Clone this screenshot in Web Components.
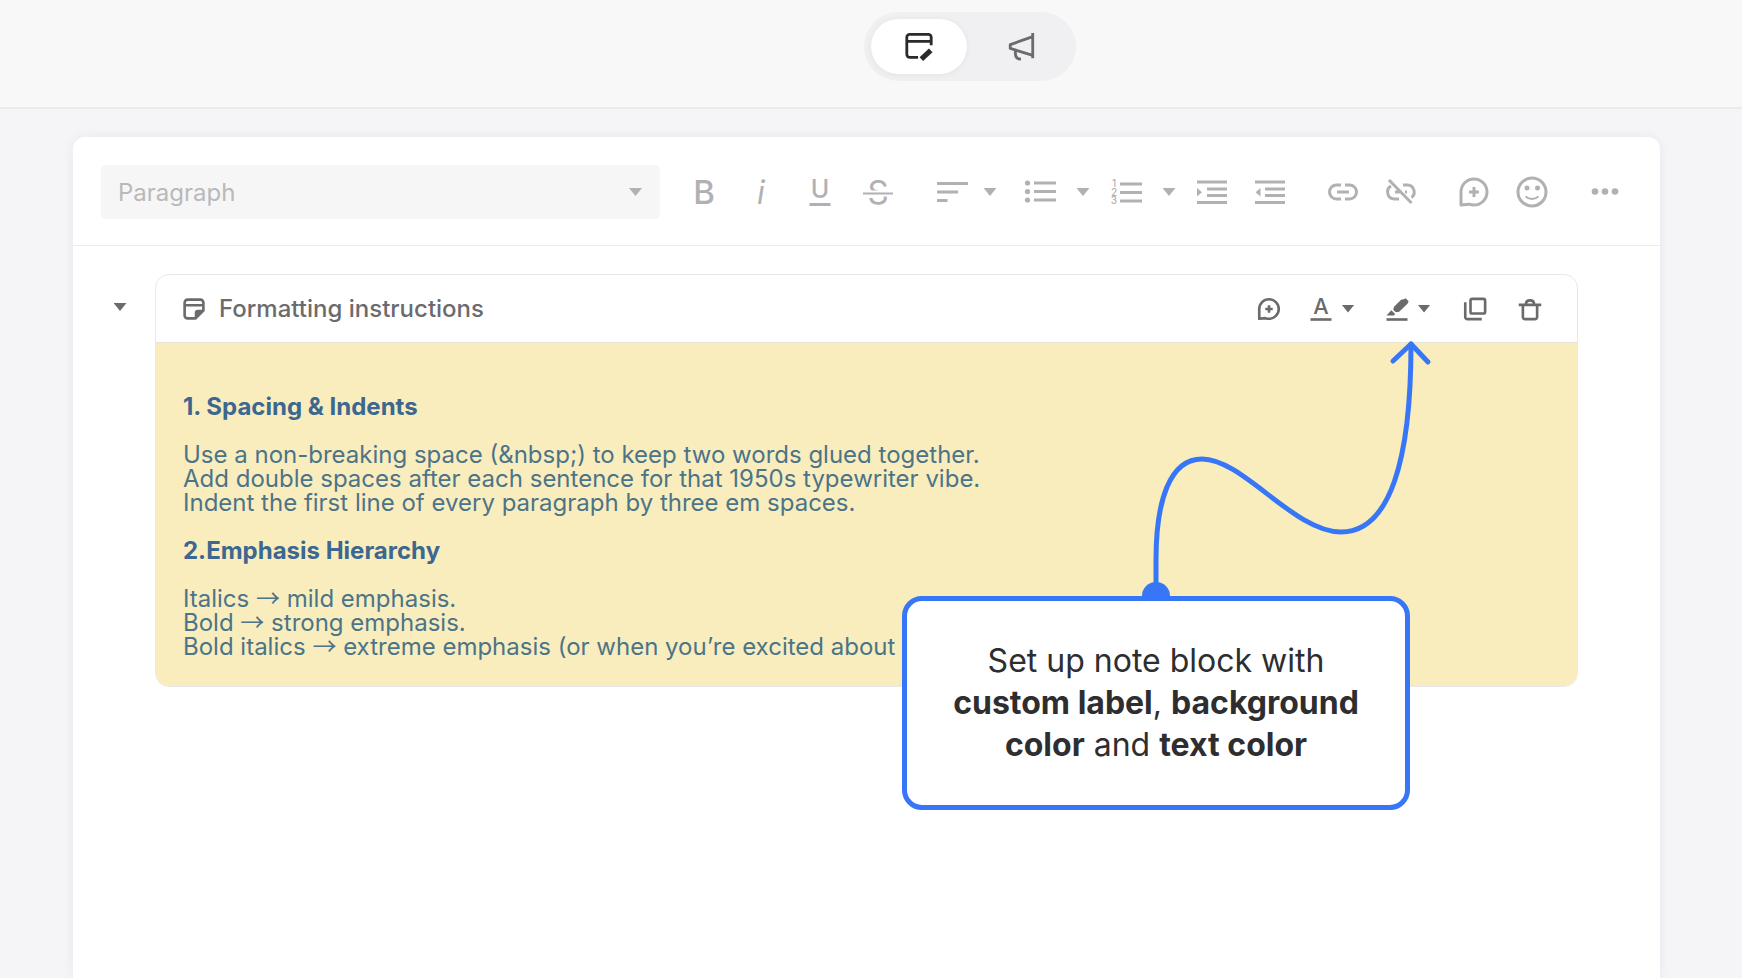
<!DOCTYPE html>
<html lang="en">
<head>
  <meta charset="UTF-8">
  <meta name="viewport" content="width=device-width, initial-scale=1.0">
  <title>Document editor</title>
  <style>
    body {
      margin: 0;
      font-family: Inter, "Liberation Sans", sans-serif;
      font-size: 24px;
      color: #2e2e30;
      background: #f5f5f8;
    }
    note-block > p {
      width: fit-content;
      margin: 0 0 24px;
    }
    note-block > p:last-of-type {
      margin-bottom: 0;
    }
    note-block strong {
      color: #3c6790;
      font-weight: 700;
    }
    note-block i {
      font-family: "Noto Sans CJK JP", sans-serif;
      font-style: normal;
      line-height: 0;
    }
    callout-tip p {
      margin: 0;
    }
  </style>
</head>
<body>
  <editor-page>
    <mode-switch slot="header"></mode-switch>
    <editor-toolbar slot="toolbar"></editor-toolbar>
    <note-block label="Formatting instructions">
      <p><strong>1. Spacing &amp; Indents</strong></p>
      <p>Use a non-breaking space (&amp;nbsp;) to keep two words glued together.<br>Add double spaces after each sentence for that 1950s typewriter vibe.<br>Indent the first line of every paragraph by three em spaces.</p>
      <p><strong>2.Emphasis Hierarchy</strong></p>
      <p>Italics <i>→</i> mild emphasis.<br>Bold <i>→</i> strong emphasis.<br>Bold italics <i>→</i> extreme emphasis (or when you’re excited about</p>
      <callout-tip slot="callout">
        <p>Set up note block with</p>
        <p><b>custom label</b>, <b>background</b></p>
        <p><b>color</b> and <b>text color</b></p>
      </callout-tip>
    </note-block>
  </editor-page>

  <script>
    // All icons share a 32 x 32 grid
    const ICONS = {
      editor: '<path d="M29 14V5.500a3 3 0 0 0-3-3H6a3 3 0 0 0-3 3V24a3 3 0 0 0 3 3h9M3 10h26"/><path d="M18.500 29 28.500 19.500" stroke-width="5.500" stroke-linecap="butt"/>',
      megaphone: '<path d="M28.500 1v27M28.500 5 4.500 13.500v4l24 7.500M10 19.500V23q0 6 6 6"/>',
      bold: '<text x="16" y="28" font-size="33" font-weight="500">B</text>',
      italic: '<text x="15" y="28" font-size="32" font-style="italic">i</text>',
      underline: '<text x="16" y="22" font-size="25" font-weight="500">U</text><path d="M5.500 28.500h21"/>',
      strike: '<text x="16" y="28" font-size="33">S</text><path d="M1 17.500h30" stroke="#fff" stroke-width="6"/><path d="M1 17.500h30" stroke-width="2"/>',
      align: '<path d="M1 7.500h31M1 16h21M1 24.500h10.500"/>',
      bullets: '<path d="M10 7h22M10 15.500h22M10 24h22"/><g fill="currentColor" stroke="none"><circle cx="3.500" cy="7" r="2.600"/><circle cx="3.500" cy="15.500" r="2.600"/><circle cx="3.500" cy="24" r="2.600"/></g>',
      numbers: '<path d="M10 8h22M10 16.500h22M10 25h22"/><g font-size="10" font-weight="500"><text x="4" y="11">1</text><text x="4" y="19.500">2</text><text x="4" y="28">3</text></g>',
      indent: '<path d="M1 6h30M11 13h20M11 19.500h20M1 26.500h30"/><path d="M1 12v8.500l5-4.250z" fill="currentColor" stroke="none"/>',
      outdent: '<path d="M1 6h30M11 13h20M11 19.500h20M1 26.500h30"/><path d="M6.500 12v8.500l-5-4.250z" fill="currentColor" stroke="none"/>',
      link: '<path d="M14 9H9.500a7 7 0 0 0 0 14H14M18 9h4.500a7 7 0 0 1 0 14H18M10 16h12" stroke-linecap="butt"/>',
      unlink: '<path d="M6 10a7 7 0 0 0 3.500 13H14M18 9h4.500a7 7 0 0 1 4 12.500M10 16h5M20 16h2M4 4l22.500 23" stroke-linecap="butt"/>',
      comment: '<path d="M3 29V16a13 13 0 1 1 13 13c-2 0-3.500-.3-5-.8z"/><path d="M16 11v10M11 16h10"/>',
      smile: '<circle cx="16" cy="16" r="14"/><path d="M9.500 20.500q6.500 5 13 0" stroke-width="2"/><g fill="currentColor" stroke="none"><circle cx="11" cy="12" r="2.500"/><circle cx="21.500" cy="12" r="2.500"/></g>',
      more: '<g fill="currentColor" stroke="none"><circle cx="6" cy="15.500" r="3.300"/><circle cx="16" cy="15.500" r="3.300"/><circle cx="26" cy="15.500" r="3.300"/></g>',
      note: '<path d="M18 28.500H7.500a4 4 0 0 1-4-4v-17a4 4 0 0 1 4-4h17a4 4 0 0 1 4 4V18M3.500 11h25"/><path d="M17 30v-9a4 4 0 0 1 4-4h9v2L19 30z" fill="currentColor" stroke="none"/>',
      color: '<text x="16" y="23" font-size="29" font-weight="500">A</text><path d="M2 30h28"/>',
      highlight: '<path d="M2 30h28"/><path d="M12 13 21.500 3.500 25 3l2.500-1.500 4 4L30 9 18.500 20H14l-3-3zM8.500 17.500l5 5-1.500 2H2z" fill="currentColor" stroke="none"/>',
      copy: '<rect x="10" y="2.500" width="19.500" height="19.500" rx="2.500"/><path d="M3 7v19.500a3 3 0 0 0 3 3h19"/>',
      trash: '<path d="M1 10.500h30M6.500 10.500v16a3 3 0 0 0 3 3h13a3 3 0 0 0 3-3v-16M10.500 10q0-5.500 5.500-5.500T21.500 10"/>'
    };

    class AppIcon extends HTMLElement {
      connectedCallback() {
        this.attachShadow({ mode: 'open' });
        this.shadowRoot.innerHTML = `
          <style>
            :host {
              display: block;
              width: var(--icon-size, 32px);
              height: var(--icon-size, 32px);
            }
            svg {
              display: block;
              width: 100%;
              height: 100%;
              overflow: visible;
              fill: none;
              stroke: currentColor;
              stroke-width: var(--icon-stroke, 3);
              stroke-linejoin: round;
            }
            text {
              fill: currentColor;
              stroke: none;
              text-anchor: middle;
            }
          </style>
          <svg viewBox="0 0 32 32" aria-hidden="true">${ICONS[this.getAttribute('name')]}</svg>
        `;
      }
    }
    customElements.define('app-icon', AppIcon);

    // Small downward triangle used by every drop-down
    class CaretDown extends HTMLElement {
      connectedCallback() {
        this.attachShadow({ mode: 'open' });
        this.shadowRoot.innerHTML = `
          <style>
            :host {
              display: block;
              width: 13px;
              height: 8px;
              background: currentColor;
              clip-path: polygon(0 0, 100% 0, 50% 100%);
            }
          </style>
        `;
      }
    }
    customElements.define('caret-down', CaretDown);

    // Icon button, with a second button for the menu when "menu" is set
    class ToolButton extends HTMLElement {
      connectedCallback() {
        const label = this.getAttribute('label');
        this.attachShadow({ mode: 'open' });
        this.shadowRoot.innerHTML = `
          <style>
            :host {
              display: flex;
              align-items: center;
            }
            button {
              display: flex;
              align-items: center;
              justify-content: center;
              width: var(--tool-width, 58px);
              height: var(--tool-height, 54px);
              padding: 0;
              border: 0;
              background: none;
              color: inherit;
              font: inherit;
              cursor: pointer;
            }
            .menu {
              width: 18px;
              margin: var(--caret-margin, 0 5px);
            }
          </style>
          <button type="button" aria-label="${label}"><app-icon name="${this.getAttribute('icon')}"></app-icon></button>
          ${this.hasAttribute('menu') ? `<button type="button" class="menu" aria-label="${label} options"><caret-down></caret-down></button>` : ''}
        `;
      }
    }
    customElements.define('tool-button', ToolButton);

    class ModeSwitch extends HTMLElement {
      connectedCallback() {
        this.attachShadow({ mode: 'open' });
        this.shadowRoot.innerHTML = `
          <style>
            :host {
              display: flex;
              gap: 6px;
              padding: 7px;
              border-radius: 35px;
              background: #f0f0f2;
              --icon-size: 30px;
            }
            button {
              display: flex;
              align-items: center;
              justify-content: center;
              width: 96px;
              height: 55px;
              padding: 0;
              border: 0;
              border-radius: 28px;
              background: none;
              color: #6b6b6e;
            }
            .active {
              background: #fff;
              color: #2a2a2c;
              box-shadow: 0 1px 6px rgba(0, 0, 0, 0.06);
            }
          </style>
          <button type="button" class="active" aria-label="Editor"><app-icon name="editor"></app-icon></button>
          <button type="button" aria-label="Announcements"><app-icon name="megaphone"></app-icon></button>
        `;
      }
    }
    customElements.define('mode-switch', ModeSwitch);

    class EditorToolbar extends HTMLElement {
      connectedCallback() {
        this.attachShadow({ mode: 'open' });
        this.shadowRoot.innerHTML = `
          <style>
            :host {
              display: flex;
              align-items: center;
              gap: 15px;
              padding: 28px 26px 26px 28px;
              border-bottom: 1px solid #ebebed;
              color: #b1b1b4;
            }
            .format {
              display: grid;
              flex: 1;
              align-items: center;
            }
            .format > * {
              grid-area: 1 / 1;
            }
            .format caret-down {
              justify-self: end;
              margin-right: 18px;
              pointer-events: none;
            }
            select {
              appearance: none;
              width: 100%;
              height: 54px;
              padding: 0 17px;
              border: 0;
              border-radius: 5px;
              background: #f6f6f6;
              color: #b9b9bc;
              font: inherit;
            }
            .group {
              display: flex;
            }
            .marks {
              margin-right: 1px;
            }
            .align {
              margin-right: 12px;
              --caret-margin: 0;
            }
          </style>
          <div class="format">
            <select aria-label="Text style">
              <option>Paragraph</option>
            </select>
            <caret-down></caret-down>
          </div>
          <div class="group marks">
            <tool-button icon="bold" label="Bold"></tool-button>
            <tool-button icon="italic" label="Italic"></tool-button>
            <tool-button icon="underline" label="Underline"></tool-button>
            <tool-button icon="strike" label="Strikethrough"></tool-button>
          </div>
          <div class="group">
            <tool-button class="align" icon="align" label="Align" menu></tool-button>
            <tool-button icon="bullets" label="Bulleted list" menu></tool-button>
            <tool-button icon="numbers" label="Numbered list" menu></tool-button>
            <tool-button icon="indent" label="Increase indent"></tool-button>
            <tool-button icon="outdent" label="Decrease indent"></tool-button>
          </div>
          <div class="group">
            <tool-button icon="link" label="Link"></tool-button>
            <tool-button icon="unlink" label="Remove link"></tool-button>
          </div>
          <div class="group">
            <tool-button icon="comment" label="Comment"></tool-button>
            <tool-button icon="smile" label="Emoji"></tool-button>
          </div>
          <tool-button icon="more" label="More"></tool-button>
        `;
      }
    }
    customElements.define('editor-toolbar', EditorToolbar);

    class NoteBlock extends HTMLElement {
      connectedCallback() {
        this.attachShadow({ mode: 'open' });
        this.shadowRoot.innerHTML = `
          <style>
            :host {
              display: flex;
              align-items: flex-start;
              color: #6b6b6e;
            }
            .toggle {
              display: flex;
              align-items: center;
              justify-content: center;
              width: 40px;
              height: 66px;
              margin-right: 15px;
              padding: 0;
              border: 0;
              background: none;
              color: inherit;
            }
            section {
              position: relative;
              flex: 1;
              border: 1px solid #e8e8ea;
              border-radius: 14px;
            }
            header {
              display: flex;
              align-items: center;
              gap: 13px;
              height: 67px;
              padding: 0 35px 0 26px;
              border-bottom: 1px solid #e8e4d8;
              --icon-size: 24px;
              --icon-stroke: 3.500;
              --tool-width: 24px;
              --tool-height: 40px;
              --caret-margin: 0 0 0 6px;
            }
            h2 {
              flex: 1;
              margin: 0;
              font-size: 24px;
              line-height: 32px;
              font-weight: 500;
            }
            .actions {
              display: flex;
              gap: 28px;
            }
            .block {
              display: flex;
              gap: 31px;
              margin-left: 17px;
            }
            .body {
              padding: 52px 27px 27px;
              border-radius: 0 0 13px 13px;
              background: #f9edbe;
              color: #4c7488;
              line-height: 24px;
            }
          </style>
          <button type="button" class="toggle" aria-label="Collapse note"><caret-down></caret-down></button>
          <section>
            <header>
              <app-icon name="note"></app-icon>
              <h2>${this.getAttribute('label')}</h2>
              <div class="actions">
                <tool-button icon="comment" label="Comment"></tool-button>
                <tool-button icon="color" label="Text color" menu></tool-button>
                <tool-button icon="highlight" label="Background color" menu></tool-button>
              </div>
              <div class="block">
                <tool-button icon="copy" label="Duplicate"></tool-button>
                <tool-button icon="trash" label="Delete"></tool-button>
              </div>
            </header>
            <div class="body"><slot></slot></div>
            <slot name="callout"></slot>
          </section>
        `;
      }
    }
    customElements.define('note-block', NoteBlock);

    // Bubble whose arrow points up at the background color button
    class CalloutTip extends HTMLElement {
      connectedCallback() {
        this.attachShadow({ mode: 'open' });
        this.shadowRoot.innerHTML = `
          <style>
            :host {
              position: absolute;
              top: 66px;
              right: 167px;
              width: 508px;
              color: #2e2e30;
              font-size: 32px;
              line-height: 42px;
              text-align: center;
            }
            svg {
              display: block;
              width: 100%;
              height: 255px;
              overflow: visible;
              fill: none;
              stroke: #3777f7;
              stroke-width: 5;
              stroke-linecap: round;
              stroke-linejoin: round;
            }
            .bubble {
              position: relative;
              padding: 39px;
              border: 5px solid #3777f7;
              border-radius: 20px;
              background: #fff;
            }
          </style>
          <svg viewBox="0 0 508 255" aria-hidden="true">
            <path d="M254 250V219C254 159 268 118 300 118C341 118 392 191 439 191C488 191 509 119 509 3"/>
            <path d="M491 20 509 3 526 21"/>
            <circle cx="254" cy="255" r="14" fill="#3777f7" stroke="none"/>
          </svg>
          <div class="bubble"><slot></slot></div>
        `;
      }
    }
    customElements.define('callout-tip', CalloutTip);

    class EditorPage extends HTMLElement {
      connectedCallback() {
        this.attachShadow({ mode: 'open' });
        this.shadowRoot.innerHTML = `
          <style>
            :host {
              display: flex;
              flex-direction: column;
              min-height: 100vh;
            }
            .top {
              display: flex;
              justify-content: center;
              padding: 12px 0 26px 198px;
              border-bottom: 2px solid #ebebed;
              background: #f8f8f8;
            }
            main {
              display: flex;
              flex: 1;
              flex-direction: column;
              padding: 28px 82px 0 73px;
            }
            .card {
              flex: 1;
              border-radius: 12px 12px 0 0;
              background: #fff;
              box-shadow: 0 0 12px rgba(30, 30, 60, 0.06);
            }
            .content {
              padding: 28px 82px 28px 27px;
            }
          </style>
          <div class="top"><slot name="header"></slot></div>
          <main>
            <div class="card">
              <slot name="toolbar"></slot>
              <div class="content"><slot></slot></div>
            </div>
          </main>
        `;
      }
    }
    customElements.define('editor-page', EditorPage);
  </script>
</body>
</html>
